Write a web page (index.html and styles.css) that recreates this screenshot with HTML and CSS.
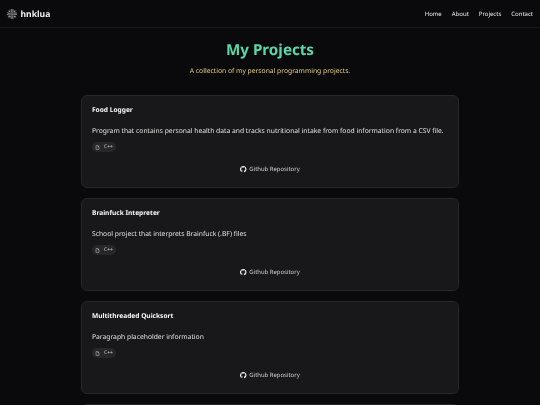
FILE: index.html
```html
<!DOCTYPE html>
<html lang="en">
<head>
<meta charset="utf-8">
<title>hnklua</title>
<link rel="stylesheet" href="styles.css">
</head>
<body>
<header class="topbar">
  <div class="brand">
    <svg class="logo" viewBox="0 0 24 24" fill="none" stroke="currentColor" stroke-width="2"><circle cx="12" cy="12" r="3"/><circle cx="12" cy="12" r="7.5" stroke-dasharray="3 1.5"/><circle cx="12" cy="12" r="10.5" stroke-dasharray="2.5 2.5"/><path d="M12 1v6M12 17v6M1 12h6M17 12h6M4 4l4 4M16 16l4 4M20 4l-4 4M8 16l-4 4"/></svg>
    <span>hnklua</span>
  </div>
  <nav class="nav">
    <a>Home</a><a>About</a><a>Projects</a><a>Contact</a>
  </nav>
</header>
<main class="page">
  <h1 class="title">My Projects</h1>
  <p class="subtitle">A collection of my personal programming projects.</p>
  <section class="cards">
    <article class="card">
      <h2 class="card-title">Food Logger</h2>
      <p class="card-text">Program that contains personal health data and tracks nutritional intake from food information from a CSV file.</p>
      <span class="tag"><svg class="tag-icon" viewBox="0 0 24 24" fill="none" stroke="currentColor" stroke-width="2.4"><path d="M5 3h9l5 5v13H5zM14 3v5h5"/></svg>C++</span>
      <a class="repo"><svg class="gh" viewBox="0 0 16 16" fill="currentColor"><path d="M8 0C3.58 0 0 3.58 0 8c0 3.54 2.29 6.53 5.47 7.59.4.07.55-.17.55-.38 0-.19-.01-.82-.01-1.49-2.01.37-2.53-.49-2.69-.94-.09-.23-.48-.94-.82-1.13-.28-.15-.68-.52-.01-.53.63-.01 1.08.58 1.23.82.72 1.21 1.87.87 2.33.66.07-.52.28-.87.51-1.07-1.78-.2-3.64-.89-3.64-3.95 0-.87.31-1.59.82-2.15-.08-.2-.36-1.02.08-2.12 0 0 .67-.21 2.2.82.64-.18 1.32-.27 2-.27s1.36.09 2 .27c1.53-1.04 2.2-.82 2.2-.82.44 1.1.16 1.92.08 2.12.51.56.82 1.27.82 2.15 0 3.07-1.87 3.75-3.65 3.95.29.25.54.73.54 1.48 0 1.07-.01 1.93-.01 2.2 0 .21.15.46.55.38A8 8 0 0 0 16 8c0-4.42-3.58-8-8-8z"/></svg>Github Repository</a>
    </article>
    <article class="card">
      <h2 class="card-title">Brainfuck Intepreter</h2>
      <p class="card-text">School project that interprets Brainfuck (.BF) files</p>
      <span class="tag"><svg class="tag-icon" viewBox="0 0 24 24" fill="none" stroke="currentColor" stroke-width="2.4"><path d="M5 3h9l5 5v13H5zM14 3v5h5"/></svg>C++</span>
      <a class="repo"><svg class="gh" viewBox="0 0 16 16" fill="currentColor"><path d="M8 0C3.58 0 0 3.58 0 8c0 3.54 2.29 6.53 5.47 7.59.4.07.55-.17.55-.38 0-.19-.01-.82-.01-1.49-2.01.37-2.53-.49-2.69-.94-.09-.23-.48-.94-.82-1.13-.28-.15-.68-.52-.01-.53.63-.01 1.08.58 1.23.82.72 1.21 1.87.87 2.33.66.07-.52.28-.87.51-1.07-1.78-.2-3.64-.89-3.64-3.95 0-.87.31-1.59.82-2.15-.08-.2-.36-1.02.08-2.12 0 0 .67-.21 2.2.82.64-.18 1.32-.27 2-.27s1.36.09 2 .27c1.53-1.04 2.2-.82 2.2-.82.44 1.1.16 1.92.08 2.12.51.56.82 1.27.82 2.15 0 3.07-1.87 3.75-3.65 3.95.29.25.54.73.54 1.48 0 1.07-.01 1.93-.01 2.2 0 .21.15.46.55.38A8 8 0 0 0 16 8c0-4.42-3.58-8-8-8z"/></svg>Github Repository</a>
    </article>
    <article class="card">
      <h2 class="card-title">Multithreaded Quicksort</h2>
      <p class="card-text">Paragraph placeholder information</p>
      <span class="tag"><svg class="tag-icon" viewBox="0 0 24 24" fill="none" stroke="currentColor" stroke-width="2.4"><path d="M5 3h9l5 5v13H5zM14 3v5h5"/></svg>C++</span>
      <a class="repo"><svg class="gh" viewBox="0 0 16 16" fill="currentColor"><path d="M8 0C3.58 0 0 3.58 0 8c0 3.54 2.29 6.53 5.47 7.59.4.07.55-.17.55-.38 0-.19-.01-.82-.01-1.49-2.01.37-2.53-.49-2.69-.94-.09-.23-.48-.94-.82-1.13-.28-.15-.68-.52-.01-.53.63-.01 1.08.58 1.23.82.72 1.21 1.87.87 2.33.66.07-.52.28-.87.51-1.07-1.78-.2-3.64-.89-3.64-3.95 0-.87.31-1.59.82-2.15-.08-.2-.36-1.02.08-2.12 0 0 .67-.21 2.2.82.64-.18 1.32-.27 2-.27s1.36.09 2 .27c1.53-1.04 2.2-.82 2.2-.82.44 1.1.16 1.92.08 2.12.51.56.82 1.27.82 2.15 0 3.07-1.87 3.75-3.65 3.95.29.25.54.73.54 1.48 0 1.07-.01 1.93-.01 2.2 0 .21.15.46.55.38A8 8 0 0 0 16 8c0-4.42-3.58-8-8-8z"/></svg>Github Repository</a>
    </article>
    <article class="card"></article>
  </section>
</main>
</body>
</html>
```
FILE: styles.css
```css
* { box-sizing: border-box; }
html, body { margin: 0; height: 100%; overflow: hidden; background: #0a0a0c; }
body { color: #e6e6e6; font-family: "Noto Sans", sans-serif; text-rendering: geometricPrecision; filter: blur(0.25px); }
.topbar { height: 28px; display: flex; align-items: center; justify-content: space-between; padding: 0 7px; border-bottom: 1px solid #1a1a1c; }
.brand { display: flex; align-items: center; gap: 3.5px; font-size: 8.6px; font-weight: 700; color: #f0f0f0; }
.logo { width: 10px; height: 10px; color: #b0b0b0; }
.nav { display: flex; gap: 10px; font-size: 6px; color: #ececec; }
.page { display: flex; flex-direction: column; align-items: center; }
.title { margin: 8.5px 0 0; font-size: 15.2px; line-height: 27px; font-weight: 700; color: #5ad8a8; }
.subtitle { margin: 1.5px 0 0; font-size: 6.75px; line-height: 11px; color: #e6d084; }
.cards { margin-top: 19px; width: 378px; display: flex; flex-direction: column; gap: 10px; }
.card { height: 93px; flex: none; display: flex; flex-direction: column; align-items: flex-start; padding: 7.5px 10px 8px; background: #18181b; border: 1px solid #27272a; border-radius: 6px; }
.card-title { margin: 0; font-size: 6.6px; line-height: 11px; font-weight: 700; color: #f8f8f8; }
.card-text { margin: 10.5px 0 0; font-size: 6.75px; line-height: 11px; color: #e0e0e0; }
.tag { margin-top: 6px; height: 10px; padding: 0 3px; width: 24px; display: flex; align-items: center; gap: 4px; border-radius: 5px; background: #27272a; font-size: 5px; color: #d0d0d0; }
.tag-icon { width: 5px; height: 5px; }
.repo { align-self: center; margin-top: 13px; display: flex; align-items: center; gap: 2.5px; font-size: 5.95px; line-height: 9px; color: #d0d0d0; }
.gh { width: 6.5px; height: 6.5px; color: #f4f4f4; }
```
